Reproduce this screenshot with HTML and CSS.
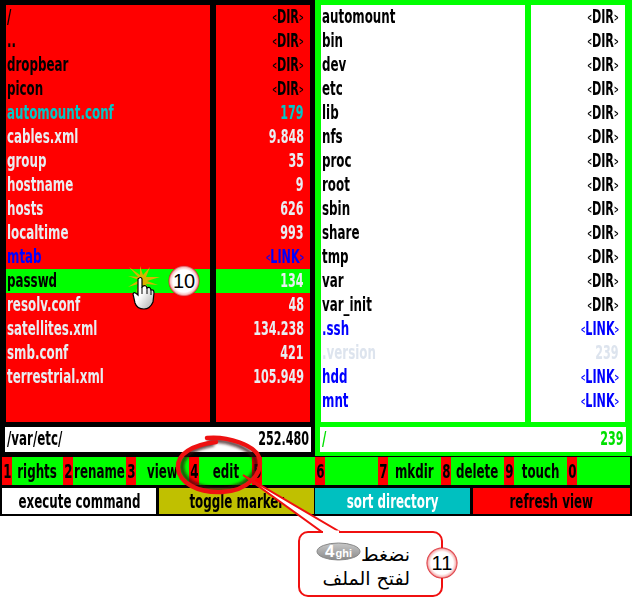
FILE: index.html
```html
<!DOCTYPE html>
<html lang="en">
<head>
<meta charset="utf-8">
<title>Filecommander</title>
<link rel="stylesheet" href="styles.css">
</head>
<body>
<div class="shot">
  <div class="screen">
    <div class="panels">
      <section class="panel panel-left">
        <div class="lists">
          <ul class="names">
            <li class="dir"><span>/</span></li><li class="dir"><span>..</span></li><li class="dir"><span>dropbear</span></li><li class="dir"><span>picon</span></li>
            <li class="exe"><span>automount.conf</span></li><li class="file"><span>cables.xml</span></li><li class="file"><span>group</span></li><li class="file"><span>hostname</span></li>
            <li class="file"><span>hosts</span></li><li class="file"><span>localtime</span></li><li class="link"><span>mtab</span></li><li class="sel dir"><span>passwd</span></li>
            <li class="file"><span>resolv.conf</span></li><li class="file"><span>satellites.xml</span></li><li class="file"><span>smb.conf</span></li><li class="file"><span>terrestrial.xml</span></li>
          </ul>
          <ul class="sizes">
            <li class="dir"><span><small>&lt;</small>DIR<small>&gt;</small></span></li><li class="dir"><span><small>&lt;</small>DIR<small>&gt;</small></span></li><li class="dir"><span><small>&lt;</small>DIR<small>&gt;</small></span></li><li class="dir"><span><small>&lt;</small>DIR<small>&gt;</small></span></li>
            <li class="exe"><span>179</span></li><li class="file"><span>9.848</span></li><li class="file"><span>35</span></li><li class="file"><span>9</span></li>
            <li class="file"><span>626</span></li><li class="file"><span>993</span></li><li class="link"><span><small>&lt;</small>LINK<small>&gt;</small></span></li><li class="sel file"><span>134</span></li>
            <li class="file"><span>48</span></li><li class="file"><span>134.238</span></li><li class="file"><span>421</span></li><li class="file"><span>105.949</span></li>
          </ul>
        </div>
        <div class="path"><span class="start">/var/etc/</span><span class="end">252.480</span></div>
      </section>
      <section class="panel panel-right">
        <div class="lists">
          <ul class="names">
            <li><span>automount</span></li><li><span>bin</span></li><li><span>dev</span></li><li><span>etc</span></li><li><span>lib</span></li><li><span>nfs</span></li><li><span>proc</span></li><li><span>root</span></li><li><span>sbin</span></li><li><span>share</span></li><li><span>tmp</span></li><li><span>var</span></li><li><span>var_init</span></li>
            <li class="link"><span>.ssh</span></li><li class="ghost"><span>.version</span></li><li class="link"><span>hdd</span></li><li class="link"><span>mnt</span></li>
          </ul>
          <ul class="sizes">
            <li><span><small>&lt;</small>DIR<small>&gt;</small></span></li><li><span><small>&lt;</small>DIR<small>&gt;</small></span></li><li><span><small>&lt;</small>DIR<small>&gt;</small></span></li><li><span><small>&lt;</small>DIR<small>&gt;</small></span></li><li><span><small>&lt;</small>DIR<small>&gt;</small></span></li><li><span><small>&lt;</small>DIR<small>&gt;</small></span></li><li><span><small>&lt;</small>DIR<small>&gt;</small></span></li><li><span><small>&lt;</small>DIR<small>&gt;</small></span></li><li><span><small>&lt;</small>DIR<small>&gt;</small></span></li><li><span><small>&lt;</small>DIR<small>&gt;</small></span></li><li><span><small>&lt;</small>DIR<small>&gt;</small></span></li><li><span><small>&lt;</small>DIR<small>&gt;</small></span></li><li><span><small>&lt;</small>DIR<small>&gt;</small></span></li>
            <li class="link"><span><small>&lt;</small>LINK<small>&gt;</small></span></li><li class="ghost"><span>239</span></li><li class="link"><span><small>&lt;</small>LINK<small>&gt;</small></span></li><li class="link"><span><small>&lt;</small>LINK<small>&gt;</small></span></li>
          </ul>
        </div>
        <div class="path path-green"><span class="start">/</span><span class="end">239</span></div>
      </section>
    </div>
    <div class="fnbar">
      <div class="fn"><b><span>1</span></b><em><span>rights</span></em></div>
      <div class="fn"><b><span>2</span></b><em><span>rename</span></em></div>
      <div class="fn"><b><span>3</span></b><em><span>view</span></em></div>
      <div class="fn"><b><span>4</span></b><em><span>edit</span></em></div>
      <div class="fn"><b><span>5</span></b><em></em></div>
      <div class="fn"><b><span>6</span></b><em></em></div>
      <div class="fn"><b><span>7</span></b><em><span>mkdir</span></em></div>
      <div class="fn"><b><span>8</span></b><em><span>delete</span></em></div>
      <div class="fn"><b><span>9</span></b><em><span>touch</span></em></div>
      <div class="fn"><b><span>0</span></b><em></em></div>
    </div>
    <div class="colorbar">
      <div class="cb cb-white"><span>execute command</span></div>
      <div class="cb cb-yellow"><span>toggle marker</span></div>
      <div class="cb cb-cyan"><span>sort directory</span></div>
      <div class="cb cb-red"><span>refresh view</span></div>
    </div>
  </div>

  <svg class="overlay" viewBox="0 0 632 599" width="632" height="599" aria-hidden="true">
    <defs>
      <filter id="soft" x="-20%" y="-20%" width="140%" height="140%"><feGaussianBlur stdDeviation="1.6"/></filter>
      <radialGradient id="badge" cx="50%" cy="50%" r="50%">
        <stop offset="0.72" stop-color="#ffffff"/><stop offset="0.88" stop-color="#f6c0c0"/><stop offset="1" stop-color="#d81820"/>
      </radialGradient>
      <linearGradient id="pill" x1="0" y1="0" x2="0" y2="1">
        <stop offset="0" stop-color="#c8c8c8"/><stop offset="1" stop-color="#8a8a8a"/>
      </linearGradient>
      <linearGradient id="hand" x1="0" y1="0" x2="1" y2="1">
        <stop offset="0.45" stop-color="#ffffff"/><stop offset="1" stop-color="#a8a8a8"/>
      </linearGradient>
    </defs>
    <path d="M208 441 C228 439 250 448 255 459 C260 474 244 488 222 489 C200 490 183 481 182 468 C181 456 194 448 214 444" fill="none" stroke="#300c0c" stroke-width="4" filter="url(#soft)" opacity=".8"/>
    <path d="M207 438 C228 436 254 445 259 457 C264 474 247 491 222 492 C198 493 179 483 178 468 C177 454 192 445 216 442" fill="none" stroke="#ee1111" stroke-width="4.4" stroke-linecap="round"/>
    <path d="M243 475 L322 532 L340 532 Z" fill="#fff" stroke="#f01010" stroke-width="2"/>
    <rect x="299" y="532" width="143" height="64" rx="9" fill="#fff" stroke="#f01010" stroke-width="2"/>
    <path d="M323 532 H339" stroke="#fff" stroke-width="3"/>
    <path d="M139 280 L128 276 L138 277 L129 267 L140 275 L140 266 L143 275 L150 267 L146 277 L160 277 L147 281 L158 285 L146 284 L150 292 L142 285 L136 293 L138 284 L128 287 Z" fill="#d8b400"/>
    <path d="M138 279 Q141 276 142 279 L142 287 Q146 284 147 288 Q150 286 151 290 Q154 289 154 293 L153 302 Q150 309 144 309 Q137 309 135 303 L133 294 Q134 291 138 295 Z" fill="url(#hand)" stroke="#000" stroke-width="1.2"/>
    <path d="M142 287 V294 M147 288 V294 M151 290 V295" stroke="#000" stroke-width="1"/>
    <circle cx="184" cy="281" r="15.500" fill="url(#badge)"/>
    <circle cx="442" cy="563" r="15.500" fill="url(#badge)"/>
    <ellipse cx="338.500" cy="551.500" rx="21.500" ry="8.500" fill="url(#pill)" stroke="#888"/>
  </svg>
  <span class="badge badge-10">10</span>
  <span class="badge badge-11">11</span>
  <span class="pill-text"><strong>4</strong>ghi</span>
  <div class="callout-text" dir="rtl" lang="ar">
    <div>نضغط</div>
    <div>لفتح الملف</div>
  </div>
</div>
</body>
</html>
```
FILE: styles.css
```css
* { box-sizing: border-box; }
html, body { margin: 0; padding: 0; background: #fff; }
.shot { position: relative; width: 632px; height: 599px; overflow: hidden; }
.screen {
  width: 632px; height: 516px; background: #000;
  font-family: "DejaVu Sans", sans-serif; font-stretch: condensed;
  font-size: 20px; font-weight: bold; color: #000;
}
.screen span { display: inline-block; white-space: nowrap; transform: scaleX(.66); }
.screen small { font-size: 10px; vertical-align: 2px; }
.panels { display: flex; height: 457px; }
.panel { display: flex; flex-direction: column; gap: 5px; padding-top: 5px; }
.panel-left { width: 315px; padding-left: 6px; padding-right: 5px; }
.panel-right { width: 317px; padding-left: 6px; padding-right: 7px; background: #00ff00; height: 456px; }
.lists { display: flex; gap: 6px; height: 417px; }
.names, .sizes { list-style: none; margin: 0; padding: 0; height: 417px; }
.names { width: 204px; }
.sizes { width: 94px; text-align: right; }
.panel-left .names, .panel-left .sizes { background: #ff0000; }
.panel-right .names, .panel-right .sizes { background: #fff; }
.names li, .sizes li { height: 24px; line-height: 22px; white-space: nowrap; }
.names li { padding-left: 1px; }
.names span, .path .start { transform-origin: left center; }
.sizes li { padding-right: 6px; }
.sizes span, .path .end { transform-origin: right center; transform: scaleX(.62); }
.dir { color: #000; }
.file { color: #e8eef2; }
.exe { color: #00c8c8; }
.link { color: #0000ff; }
.ghost { color: #dde4ee; }
.names li.sel, .sizes li.sel { background: #00ff00; }
.path {
  display: flex; justify-content: space-between;
  height: 25px; line-height: 23px; margin: 0 -1px; padding: 0 2px;
  background: #fff; color: #000;
}
.path-green { color: #00e000; }
.fnbar { display: flex; height: 28px; padding-left: 2px; padding-right: 2px; }
.fn { display: flex; flex: none; width: 63px; height: 28px; }
.fn:first-child { width: 61px; }
.fn b, .fn em { display: flex; justify-content: center; min-width: 0; font-style: normal; line-height: 29px; }
.fn b { width: 10px; background: #ff0000; flex: none; }
.fn em { flex: 1; background: #00ff00; }
.colorbar { display: flex; height: 27px; margin-top: 3px; padding: 0 2px; gap: 3px; }
.cb { display: flex; justify-content: center; flex: none; min-width: 0; line-height: 27px; height: 26px; }
.cb-white { width: 154px; background: #fff; }
.cb-yellow { width: 155px; background: #c0c000; }
.cb-cyan { width: 155px; background: #00c0c0; color: #fff; margin-left: -2px; }
.cb-red { width: 157px; background: #ff0000; }
.overlay { position: absolute; left: 0; top: 0; }
.badge {
  position: absolute; width: 30px; height: 30px; line-height: 30px; text-align: center;
  font-family: "Liberation Sans", sans-serif; font-size: 20px; color: #000;
}
.badge-10 { left: 169px; top: 266px; }
.badge-11 { left: 427px; top: 548px; }
.pill-text {
  position: absolute; left: 325px; top: 541px; color: #fff;
  font-family: "Liberation Sans", sans-serif; font-size: 11px; font-weight: bold; line-height: 21px;
}
.pill-text strong { font-size: 17px; padding-right: 1px; }
.callout-text {
  position: absolute; left: 310px; top: 542px; width: 100px;
  font-family: "DejaVu Sans", sans-serif; font-size: 19px; line-height: 24px; color: #000;
  text-align: right; white-space: nowrap;
}
```
